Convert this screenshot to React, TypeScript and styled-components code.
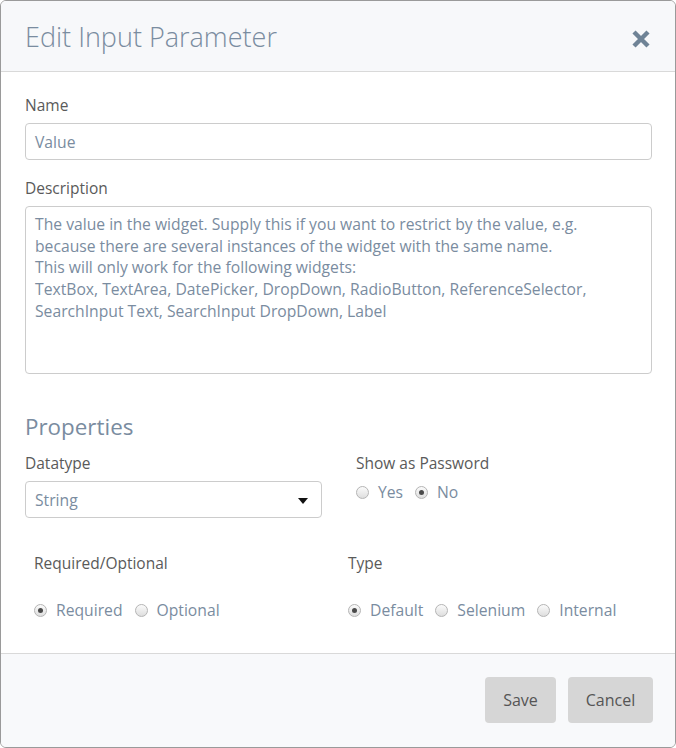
import React from "react";
import styled, { createGlobalStyle } from "styled-components";

const Global = createGlobalStyle`
  html, body { margin: 0; padding: 0; background: #fff; }
  body { font-family: "Open Sans", "Noto Sans", sans-serif; }
  * { box-sizing: border-box; }
`;

const Modal = styled.div`
  width: 676px;
  height: 748px;
  border: 1px solid #9a9a9a;
  border-radius: 6px;
  overflow: hidden;
  display: flex;
  flex-direction: column;
  background: #fff;
`;

const Header = styled.div`
  height: 71px;
  flex: none;
  background: #f7f8fa;
  border-bottom: 1px solid #d9d9d9;
  display: flex;
  align-items: center;
  justify-content: space-between;
  padding: 0 24px 0 24px;
`;

const Title = styled.h1`
  margin: 0;
  font-weight: 300;
  font-size: 27px;
  color: #7a8ca0;
`;

const CloseBtn = styled.button`
  border: 0;
  background: transparent;
  padding: 0;
  width: 24px;
  height: 24px;
  display: flex;
  align-items: center;
  justify-content: center;
  margin-top: 6px;
  margin-right: -2px;
`;

const Body = styled.div`
  flex: 1;
  padding: 23px 23px 0 24px;
  display: flex;
  flex-direction: column;
`;

const Label = styled.div<{ $top?: number }>`
  font-size: 15.5px;
  color: #5a5a5a;
  line-height: 20px;
  margin-top: ${(p) => p.$top ?? 0}px;
`;

const TextInput = styled.div`
  margin-top: 8px;
  height: 37px;
  border: 1px solid #ccc;
  border-radius: 4px;
  padding: 0 9px;
  display: flex;
  align-items: center;
  font-size: 15.7px;
  color: #7a8ca0;
`;

const TextArea = styled.div`
  margin-top: 8px;
  height: 168px;
  border: 1px solid #ccc;
  border-radius: 4px;
  padding: 7px 9px;
  font-size: 15.7px;
  line-height: 21.7px;
  color: #7a8ca0;
  white-space: pre-line;
`;

const Section = styled.h2`
  margin: 38px 0 0;
  font-weight: 400;
  font-size: 22.4px;
  color: #7a8ca0;
  line-height: 30px;
`;

const Row = styled.div<{ $top: number }>`
  display: grid;
  grid-template-columns: 297px 1fr;
  column-gap: 34px;
  margin-top: ${(p) => p.$top}px;
`;

const Col = styled.div<{ $shift?: number }>`
  display: flex;
  flex-direction: column;
  margin-left: ${(p) => p.$shift ?? 0}px;
`;

const Select = styled.div`
  margin-top: 8px;
  height: 37px;
  border: 1px solid #ccc;
  border-radius: 4px;
  padding: 0 9px;
  display: flex;
  align-items: center;
  justify-content: space-between;
  font-size: 15.7px;
  color: #7a8ca0;
`;

const Caret = styled.span`
  width: 0;
  height: 0;
  border-left: 5px solid transparent;
  border-right: 5px solid transparent;
  border-top: 6px solid #111;
  margin-right: 4px;
  margin-top: 2px;
`;

const Radios = styled.div<{ $top: number }>`
  display: flex;
  align-items: center;
  gap: 12px;
  margin-top: ${(p) => p.$top}px;
`;

const RadioItem = styled.label`
  display: flex;
  align-items: center;
  gap: 9px;
  font-size: 15.7px;
  color: #7a8ca0;
  line-height: 20px;
`;

const Dot = styled.span<{ $on?: boolean }>`
  width: 13px;
  height: 13px;
  border-radius: 50%;
  border: 1px solid #b5b5b5;
  background: linear-gradient(#fbfbfb, #dedede);
  display: flex;
  align-items: center;
  justify-content: center;
  &::after {
    content: "";
    display: ${(p) => (p.$on ? "block" : "none")};
    width: 5px;
    height: 5px;
    border-radius: 50%;
    background: #4a4a4a;
  }
`;

const Footer = styled.div`
  height: 94px;
  flex: none;
  background: #f8f9fb;
  border-top: 1px solid #d9d9d9;
  display: flex;
  justify-content: flex-end;
  align-items: center;
  gap: 12px;
  padding: 0 22px 1px 0;
`;

const Button = styled.button<{ $w: number }>`
  width: ${(p) => p.$w}px;
  height: 46px;
  border: 0;
  border-radius: 4px;
  background: #d6d6d6;
  color: #555;
  font-family: "Open Sans", sans-serif;
  font-size: 16px;
`;

const Radio = ({ label, on }: { label: string; on?: boolean }) => (
  <RadioItem>
    <Dot $on={on} />
    {label}
  </RadioItem>
);

export default function App() {
  return (
    <>
      <Global />
      <Modal>
        <Header>
          <Title>Edit Input Parameter</Title>
          <CloseBtn aria-label="close">
            <svg width="20" height="20" viewBox="0 0 20 20">
              <path d="M3 3 L17 17 M17 3 L3 17" stroke="#6f8396" strokeWidth="4.4" strokeLinecap="butt" />
            </svg>
          </CloseBtn>
        </Header>
        <Body>
          <Label>Name</Label>
          <TextInput>Value</TextInput>
          <Label $top={18}>Description</Label>
          <TextArea>
            {"The value in the widget. Supply this if you want to restrict by the value, e.g.\nbecause there are several instances of the widget with the same name.\nThis will only work for the following widgets:\nTextBox, TextArea, DatePicker, DropDown, RadioButton, ReferenceSelector,\nSearchInput Text, SearchInput DropDown, Label"}
          </TextArea>
          <Section>Properties</Section>
          <Row $top={11}>
            <Col>
              <Label>Datatype</Label>
              <Select>
                String
                <Caret />
              </Select>
            </Col>
            <Col>
              <Label>Show as Password</Label>
              <Radios $top={9}>
                <Radio label="Yes" />
                <Radio label="No" on />
              </Radios>
            </Col>
          </Row>
          <Row $top={35}>
            <Col $shift={9}>
              <Label>Required/Optional</Label>
              <Radios $top={27}>
                <Radio label="Required" on />
                <Radio label="Optional" />
              </Radios>
            </Col>
            <Col $shift={-8}>
              <Label>Type</Label>
              <Radios $top={27}>
                <Radio label="Default" on />
                <Radio label="Selenium" />
                <Radio label="Internal" />
              </Radios>
            </Col>
          </Row>
        </Body>
        <Footer>
          <Button $w={71}>Save</Button>
          <Button $w={85}>Cancel</Button>
        </Footer>
      </Modal>
    </>
  );
}
